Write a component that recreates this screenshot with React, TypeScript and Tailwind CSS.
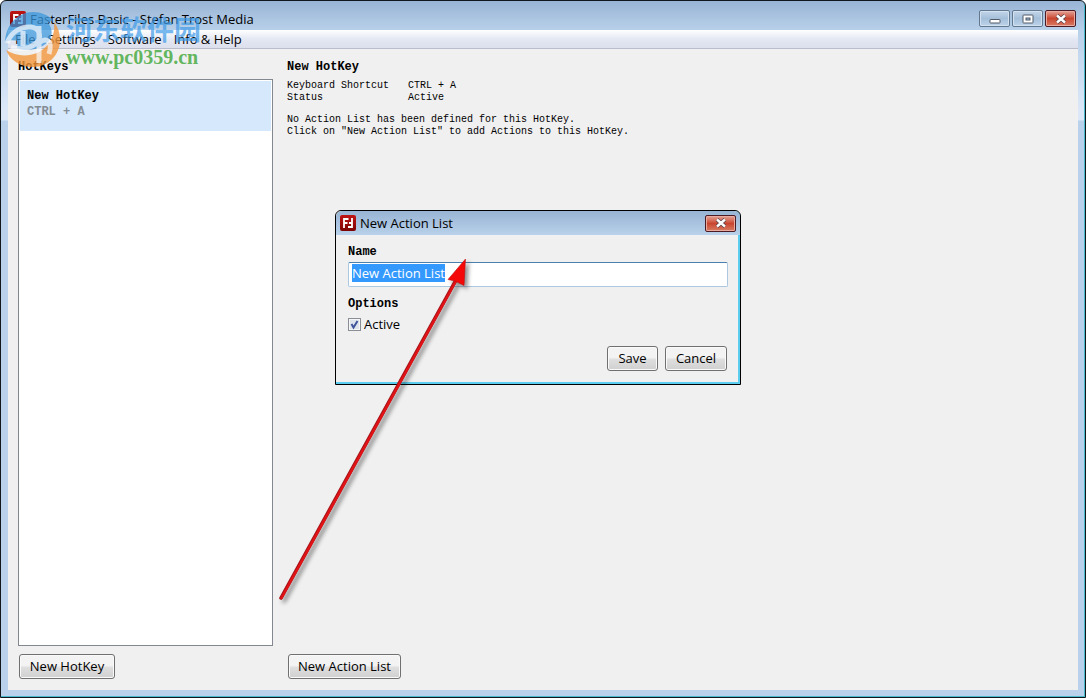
import React, { FC, ReactNode, useEffect, useRef } from "react";

const menuItems = ["File", "Settings", "Software", "Info & Help"];

const hotKeys = [{ name: "New HotKey", shortcut: "CTRL + A" }];

const details = [
  { label: "Keyboard Shortcut", value: "CTRL + A" },
  { label: "Status", value: "Active" },
];

const AppIcon: FC = () => (
  <svg viewBox="0 0 16 16" className="h-4 w-4 shrink-0" aria-hidden="true">
    <defs>
      <linearGradient id="appRed" x1="0" y1="0" x2="0" y2="1">
        <stop offset="0" stopColor="#c01414" />
        <stop offset="1" stopColor="#7c0404" />
      </linearGradient>
    </defs>
    <rect width="16" height="16" rx="2" fill="url(#appRed)" />
    <path
      d="M4 13V4H8.500M4 8H7.500M12 3V12H8M12 8H9"
      fill="none"
      stroke="#fff"
      strokeWidth="1.800"
    />
  </svg>
);

type CaptionButtonProps = {
  label: string;
  danger?: boolean;
  children: ReactNode;
};

const CaptionButton: FC<CaptionButtonProps> = ({ label, danger, children }) => (
  <button
    type="button"
    aria-label={label}
    className={
      danger
        ? "flex h-[17px] w-[31px] items-center justify-center rounded-xs border border-[#4c1a22] bg-linear-to-b from-[#e3a196] via-[#c9452f] to-[#d87a62] shadow-[inset_0_0_0_1px_#e9aaa0]"
        : "flex h-[17px] w-[31px] items-center justify-center rounded-xs border border-[#62788f] bg-linear-to-b from-[#c3d5e8] via-[#a5bfda] to-[#bdd3ea] shadow-[inset_0_0_0_1px_#d3e1f0]"
    }
  >
    {children}
  </button>
);

const CloseGlyph: FC = () => (
  <svg viewBox="0 0 12 10" className="h-[10px] w-3" aria-hidden="true">
    <path d="M2 1.500L10 8.500M10 1.500L2 8.500" stroke="#5a4048" strokeWidth="4" />
    <path d="M2 1.500L10 8.500M10 1.500L2 8.500" stroke="#fff" strokeWidth="2.400" />
  </svg>
);

const MinimizeGlyph: FC = () => (
  <svg viewBox="0 0 12 10" className="h-[10px] w-3" aria-hidden="true">
    <rect x="1" y="5.500" width="10" height="3.500" rx="0.500" fill="#fff" stroke="#505a68" />
  </svg>
);

const MaximizeGlyph: FC = () => (
  <svg viewBox="0 0 12 10" className="h-[10px] w-3" aria-hidden="true">
    <rect x="1" y="1" width="10" height="8" rx="0.500" fill="#fff" stroke="#505a68" />
    <rect x="4" y="4" width="4" height="2" fill="#9db8d4" stroke="#505a68" />
  </svg>
);

type PushButtonProps = {
  className: string;
  children: ReactNode;
};

const PushButton: FC<PushButtonProps> = ({ className, children }) => (
  <button
    type="button"
    className={`${className} flex h-[25px] items-center justify-center rounded-[3px] border border-[#707070] bg-linear-to-b from-[#f3f3f3] from-45% via-[#dedede] via-55% to-[#d0d0d0] pb-px text-[13px] leading-5 whitespace-nowrap text-black shadow-[inset_0_0_0_1px_#fafafa]`}
  >
    {children}
  </button>
);

const NewActionListDialog: FC = () => {
  const nameRef = useRef<HTMLInputElement>(null);

  // Open with the suggested name selected
  useEffect(() => {
    nameRef.current?.focus();
    nameRef.current?.select();
  }, []);

  return (
    <div
      role="dialog"
      aria-label="New Action List"
      className="absolute top-[209px] left-[334px] w-[406px] rounded-t-md border border-black bg-[#f0f0f0] shadow-[inset_-1px_-1px_0_1px_#5bcdee]"
    >
      <div className="flex h-6 items-center gap-1 rounded-t-md bg-linear-to-b from-[#98b4d4] to-[#b9d1ea] px-1">
        <AppIcon />
        <span className="flex-1 leading-5">New Action List</span>
        <CaptionButton label="Close" danger>
          <CloseGlyph />
        </CaptionButton>
      </div>
      <form className="flex flex-col px-3 pt-[9px] pb-[13px]">
        <label
          htmlFor="list-name"
          className="font-['Liberation_Mono',monospace] text-xs font-bold"
        >
          Name
        </label>
        <input
          id="list-name"
          ref={nameRef}
          type="text"
          defaultValue="New Action List"
          className="mt-[2px] h-[25px] rounded-xs border border-[#abc8e0] border-t-[#4a7fae] bg-white px-[3px] pb-[3px] text-[13px] outline-none selection:bg-[#3399ff] selection:text-white"
        />
        <fieldset className="mt-[9px]">
          <legend className="font-['Liberation_Mono',monospace] text-xs font-bold">
            Options
          </legend>
          <label className="mt-[2px] flex items-center gap-[3px] leading-5">
            <span className="grid">
              <input
                type="checkbox"
                defaultChecked
                className="peer col-start-1 row-start-1 h-[13px] w-[13px] appearance-none border border-[#8a8f96] bg-[#dfe4ec] shadow-[inset_0_0_0_1px_#f6f6f6]"
              />
              <svg
                viewBox="0 0 13 13"
                className="pointer-events-none invisible col-start-1 row-start-1 h-[13px] w-[13px] peer-checked:visible"
                aria-hidden="true"
              >
                <path d="M3.500 6L5.500 9.500L9.500 3" fill="none" stroke="#3f559c" strokeWidth="2" />
              </svg>
            </span>
            Active
          </label>
        </fieldset>
        <div className="mt-3 flex justify-end gap-[7px] pr-px">
          <PushButton className="w-[51px]">Save</PushButton>
          <PushButton className="w-[62px]">Cancel</PushButton>
        </div>
      </form>
    </div>
  );
};

const PointerArrow: FC = () => (
  <svg
    viewBox="0 0 200 350"
    className="pointer-events-none absolute top-[254px] left-[274px] h-[350px] w-[200px] drop-shadow-[3px_3px_2px_rgba(0,0,0,0.45)]"
    aria-hidden="true"
  >
    <path d="M6 343L181 25" stroke="#a81418" strokeWidth="3.600" strokeLinecap="round" />
    <path d="M6.500 343L181.500 25" stroke="#e01216" strokeWidth="2.400" strokeLinecap="round" />
    <path d="M190.500 4L173 24.500L180 26L189 30.500Z" fill="#f40808" stroke="#c01010" strokeWidth="0.600" />
  </svg>
);

const Watermark: FC = () => (
  <div className="pointer-events-none absolute top-[9px] left-[2px] flex items-start gap-[3px]">
    <svg viewBox="0 0 60 60" className="h-[60px] w-[60px]" aria-hidden="true">
      <path
        d="M2 32C3 14 15 2 30 2C38 2 45 5 50 10L45 13C50 18 50 27 44 33C36 40 22 42 14 38L15 31C11 30 7 30 2 32Z"
        fill="#3b97db"
        opacity="0.75"
      />
      <path
        d="M51 12C55 17 57 23 57 30C57 45 45 57 30 57C17 57 7 50 3 40C12 46 24 47 34 43C45 38 53 26 51 12Z"
        fill="#f2963a"
        opacity="0.8"
      />
      <path
        d="M4 33C8 22 18 16 28 17C38 18 39 29 32 34C26 39 16 40 8 37M20 21V36M36 16V53M36 33C43 27 50 30 46 44"
        fill="none"
        stroke="#f8fafc"
        strokeWidth="5"
        opacity="0.7"
      />
    </svg>
    <div className="flex flex-col gap-[2px] pt-[5px] whitespace-nowrap">
      <span className="font-['Noto_Sans_CJK_SC',sans-serif] text-[27px] leading-7 font-bold text-[#3c9ae8]/70">
        河东软件园
      </span>
      <span className="font-['Liberation_Serif',serif] text-xl leading-6 font-bold text-[#4fae4b]/90">
        www.pc0359.cn
      </span>
    </div>
  </div>
);

const App: FC = () => (
  <div className="relative flex h-screen flex-col overflow-hidden rounded-t-md border border-[#10181c] bg-[linear-gradient(#98b4d4,#b9d1ea_30px,#dce8f8_110px,#dce8f8_119px,#b9d1ea_120px)] px-[7px] pb-[7px] font-['Open_Sans',sans-serif] text-[13px] text-black shadow-[inset_-1px_-1px_0_#4bb9cc]">
    <header className="flex h-[29px] shrink-0 items-center gap-1 px-[2px] pt-[6px]">
      <AppIcon />
      <h1 className="flex-1 leading-5">FasterFiles Basic - Stefan Trost Media</h1>
      <div className="flex gap-[2px]">
        <CaptionButton label="Minimize">
          <MinimizeGlyph />
        </CaptionButton>
        <CaptionButton label="Maximize">
          <MaximizeGlyph />
        </CaptionButton>
        <CaptionButton label="Close" danger>
          <CloseGlyph />
        </CaptionButton>
      </div>
    </header>

    <nav className="flex h-[19px] shrink-0 items-center border-b border-[#b8bccb] bg-linear-to-b from-white via-[#e4e8f3] to-[#dcdfec] pl-px">
      {menuItems.map((item) => (
        <button key={item} type="button" className="px-[6px] leading-[18px]">
          {item}
        </button>
      ))}
    </nav>

    <main className="flex min-h-0 flex-1 gap-[14px] bg-[#f0f0f0] px-[10px] pt-[10px] pb-[11px]">
      <section className="flex w-[255px] shrink-0 flex-col font-['Liberation_Mono',monospace] text-xs">
        <h2 className="font-bold">HotKeys</h2>
        <ul className="mt-1 flex-1 border border-[#828790] bg-white">
          {hotKeys.map((hotKey) => (
            <li key={hotKey.name} className="m-px bg-[#d5e8fc] px-[7px] pt-[7px] pb-[11px] font-bold">
              <p>{hotKey.name}</p>
              <p className="text-[#858d94]">{hotKey.shortcut}</p>
            </li>
          ))}
        </ul>
        <div className="mt-2 flex pl-px font-['Open_Sans',sans-serif]">
          <PushButton className="w-24">New HotKey</PushButton>
        </div>
      </section>

      <section className="flex flex-1 flex-col font-['Liberation_Mono',monospace] text-[10px] leading-3">
        <h2 className="text-xs font-bold">New HotKey</h2>
        <dl className="mt-[5px]">
          {details.map((row) => (
            <div key={row.label} className="flex">
              <dt className="w-[121px]">{row.label}</dt>
              <dd>{row.value}</dd>
            </div>
          ))}
        </dl>
        <p className="mt-[10px] flex-1">
          No Action List has been defined for this HotKey.
          <br />
          Click on "New Action List" to add Actions to this HotKey.
        </p>
        <div className="flex pl-px font-['Open_Sans',sans-serif]">
          <PushButton className="w-[113px]">New Action List</PushButton>
        </div>
      </section>
    </main>

    <NewActionListDialog />
    <PointerArrow />
    <Watermark />
  </div>
);

export default App;
